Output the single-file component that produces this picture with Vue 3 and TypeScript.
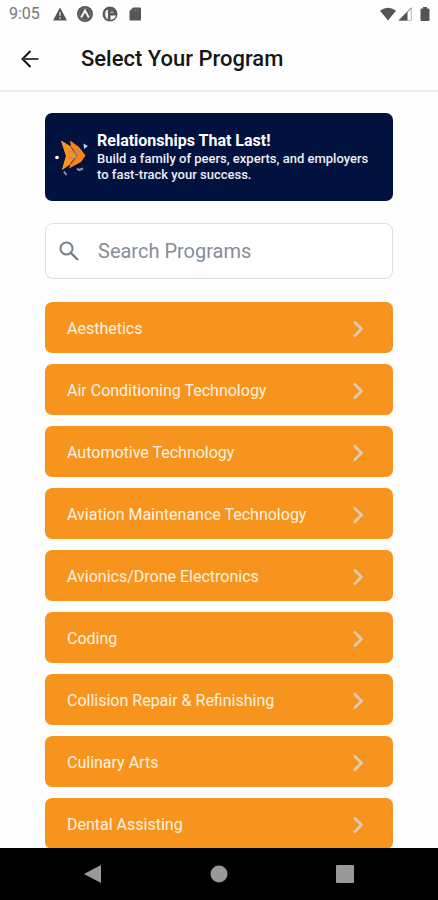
<script setup lang="ts">
import { computed, ref } from 'vue'

const programs: string[] = [
  'Aesthetics',
  'Air Conditioning Technology',
  'Automotive Technology',
  'Aviation Maintenance Technology',
  'Avionics/Drone Electronics',
  'Coding',
  'Collision Repair & Refinishing',
  'Culinary Arts',
  'Dental Assisting',
]

const query = ref('')
const visiblePrograms = computed(() =>
  programs.filter((name) => name.toLowerCase().includes(query.value.trim().toLowerCase())),
)
</script>

<template>
  <div class="screen">
    <div class="status">
      <div class="status-group">
        <span class="clock">9:05</span>
        <svg class="status-icon" viewBox="0 0 16 16" aria-hidden="true">
          <path d="M8 1.5 15 14.5H1Z" fill="#555" />
          <path d="M8 6v4M8 11.3v1.6" stroke="#ccc" stroke-width="1.5" />
        </svg>
        <svg class="status-icon" viewBox="0 0 16 16" aria-hidden="true">
          <circle cx="8" cy="8" r="8" fill="#555" />
          <circle cx="8" cy="8" r="6" fill="none" stroke="#777" stroke-width="1" />
          <path d="M4.200 11.500 8 4.500l3.800 7" fill="none" stroke="#f4f4f4" stroke-width="2" />
        </svg>
        <svg class="status-icon" viewBox="0 0 16 16" aria-hidden="true">
          <circle cx="8" cy="8" r="7.500" fill="#5a5a5a" />
          <path d="M4.500 4q-3 4 0 8.500L6 13V4Z" fill="#eee" />
          <path d="M8.500 9.500H14q-1 3.500-5.500 4.500Z" fill="#f6f6f6" />
          <path d="M8.500 5.500h3v1.600h-3Z" fill="#aaa" />
        </svg>
        <svg class="status-icon" viewBox="0 0 16 16" aria-hidden="true">
          <path d="M6 1.500h7q1 0 1 1v11q0 1-1 1H3.500q-1 0-1-1V5Z" fill="#555" />
          <path d="M6.200 3.200v2.400M8.500 3.200v2.400M10.800 3.200v2.400" stroke="#777" stroke-width="1" />
        </svg>
      </div>
      <div class="signals">
        <svg class="wifi" viewBox="0 0 16 14" aria-hidden="true">
          <path d="M0 3.800Q8-2.200 16 3.800L8 13.500Z" fill="#555" />
        </svg>
        <svg class="cell" viewBox="0 0 14 14" aria-hidden="true">
          <path d="M13.300 1v12.300H1Z" fill="#fff" stroke="#bbb" />
          <path d="M9.500 4.500v9H.5Z" fill="#555" />
          <path d="M9 5.200 13.500.8" stroke="#777" />
        </svg>
        <svg class="battery" viewBox="0 0 10 14" aria-hidden="true">
          <path d="M3 0h4v1.500h1.500q1 0 1 1V13q0 1-1 1h-7q-1 0-1-1V2.500q0-1 1-1H3Z" fill="#555" />
        </svg>
      </div>
    </div>

    <header class="app-bar">
      <button class="back" type="button" aria-label="Back">
        <svg viewBox="0 0 18 18" aria-hidden="true">
          <path d="M9.500 1 1.500 9l8 8" fill="none" stroke="#111" stroke-width="2" />
          <path d="M2 9h15.500" stroke="#444" stroke-width="2" />
        </svg>
      </button>
      <h1>Select Your Program</h1>
    </header>

    <main class="content">
      <section class="banner">
        <svg class="banner-logo" viewBox="0 0 36 40" aria-hidden="true">
          <path d="M7 3.500 17 9.500 16 3.500 25 10 31.500 18.500 27 25 15 31.500 16.500 27 8 33 12 19Z" fill="#f7861a" />
          <path d="M7 3.500 17 10 23 18.500 16 27 8 33 12 19Z" fill="#f7941d" />
          <path d="m17 10 6 8.500L16.500 27" fill="none" stroke="#8d4a22" stroke-width="1.300" />
          <path d="m15 15 3-1 3 3 5-3M15 20l4 1.500 4-2.500" fill="none" stroke="#b08f72" stroke-width="1.600" />
          <circle cx="3" cy="20.500" r="1.800" fill="#fff" />
          <path d="m29.500 6.500 4.500 2.500-4 3Z" fill="#c8cede" />
          <path d="m10 34.500 2.500 3.500M23 31.500l2 1.500 4-1.500" fill="none" stroke="#8e95ad" stroke-width="2" />
        </svg>
        <div class="banner-copy">
          <h2>Relationships That Last!</h2>
          <p>Build a family of peers, experts, and employers to fast-track your success.</p>
        </div>
      </section>

      <label class="search">
        <svg viewBox="0 0 20 20" aria-hidden="true">
          <circle cx="7.500" cy="7.500" r="6" fill="none" stroke="#75808a" stroke-width="2" />
          <path d="m12 12 7 7" stroke="#75808a" stroke-width="2.400" />
        </svg>
        <input v-model="query" type="text" placeholder="Search Programs" aria-label="Search Programs" />
      </label>

      <ul class="programs">
        <li v-for="name in visiblePrograms" :key="name">
          <button class="program" type="button">
            <span>{{ name }}</span>
            <svg viewBox="0 0 12 18" aria-hidden="true">
              <path d="m2 1.500 7.500 7.500L2 16.500" fill="none" stroke="#dccfb9" stroke-width="2.600" />
            </svg>
          </button>
        </li>
      </ul>
    </main>

    <nav class="system-nav" aria-label="System">
      <button type="button" aria-label="System back">
        <svg viewBox="0 0 18 18" aria-hidden="true"><path d="M17 0v18L0 9Z" fill="#999" /></svg>
      </button>
      <button type="button" aria-label="Home">
        <svg viewBox="0 0 18 18" aria-hidden="true"><circle cx="9" cy="9" r="8.500" fill="#999" /></svg>
      </button>
      <button type="button" aria-label="Recent apps">
        <svg viewBox="0 0 18 18" aria-hidden="true"><rect width="18" height="18" rx="1" fill="#999" /></svg>
      </button>
    </nav>
  </div>
</template>

<style>
body {
  margin: 0;
  background: #fff;
}
</style>

<style scoped>
.screen {
  display: flex;
  flex-direction: column;
  height: 100vh;
  overflow: hidden;
  background: #fefefe;
  font-family: Roboto, 'Liberation Sans', sans-serif;
}

.screen * {
  box-sizing: border-box;
}

button {
  border: 0;
  padding: 0;
  background: none;
  font: inherit;
  cursor: pointer;
}

svg {
  display: block;
  flex: none;
}

h1,
h2,
p,
ul {
  margin: 0;
  padding: 0;
}

.status {
  display: flex;
  flex: none;
  align-items: center;
  justify-content: space-between;
  height: 28px;
  padding: 0 8px 0 9px;
}

.status-group {
  display: flex;
  align-items: center;
  gap: 9px;
}

.clock {
  margin-right: 3px;
  color: #777;
  font-size: 16px;
  line-height: 28px;
}

.status-icon {
  width: 16px;
  height: 16px;
}

.signals {
  display: flex;
  align-items: center;
  gap: 2px;
}

.wifi {
  width: 16px;
  height: 14px;
}

.cell {
  width: 14px;
  height: 14px;
}

.battery {
  width: 10px;
  height: 14px;
  margin-left: 6px;
}

.app-bar {
  display: flex;
  flex: none;
  align-items: center;
  gap: 33px;
  height: 64px;
  padding: 0 12px;
  border-bottom: 2px solid #ededed;
}

.back {
  display: grid;
  place-items: center;
  width: 36px;
  height: 36px;
}

.back svg {
  width: 18px;
  height: 18px;
}

h1 {
  color: #161616;
  font-size: 22px;
  font-weight: 500;
  line-height: 30px;
}

.content {
  flex: 1;
  min-height: 0;
  padding: 21px 45px 0;
  overflow: hidden;
}

.banner {
  display: flex;
  align-items: center;
  gap: 7px;
  min-height: 88px;
  padding: 0 16px 0 9px;
  border-radius: 7px;
  background: #02123f;
  color: #fff;
}

.banner-logo {
  width: 36px;
  height: 40px;
}

h2 {
  font-size: 16px;
  font-weight: 700;
  line-height: 20px;
}

.banner-copy p {
  color: #eceef4;
  font-size: 13px;
  font-weight: 500;
  line-height: 16px;
}

.search {
  display: flex;
  align-items: center;
  gap: 19px;
  height: 56px;
  margin-top: 22px;
  padding: 0 13px;
  border: 1px solid #dcdfe2;
  border-radius: 8px;
  background: #fff;
}

.search svg {
  width: 20px;
  height: 20px;
}

.search input {
  flex: 1;
  min-width: 0;
  padding: 0;
  border: 0;
  outline: 0;
  background: none;
  color: #333;
  font: inherit;
  font-size: 20px;
}

.search input::placeholder {
  color: #868e98;
  opacity: 1;
}

.programs {
  display: grid;
  gap: 11px;
  margin-top: 23px;
  list-style: none;
}

.program {
  display: flex;
  align-items: center;
  justify-content: space-between;
  width: 100%;
  height: 51px;
  padding: 2px 29px 0 22px;
  border-radius: 7px;
  background: #f7941d;
  color: #fff2e2;
  font-size: 16px;
  font-weight: 400;
  line-height: 20px;
  text-align: left;
}

.program svg {
  width: 12px;
  height: 18px;
}

.system-nav {
  display: flex;
  flex: none;
  align-items: center;
  justify-content: center;
  height: 52px;
  background: #000;
}

.system-nav button {
  display: grid;
  flex: 0 1 126px;
  place-items: center;
  height: 52px;
}

.system-nav svg {
  width: 18px;
  height: 18px;
}
</style>
